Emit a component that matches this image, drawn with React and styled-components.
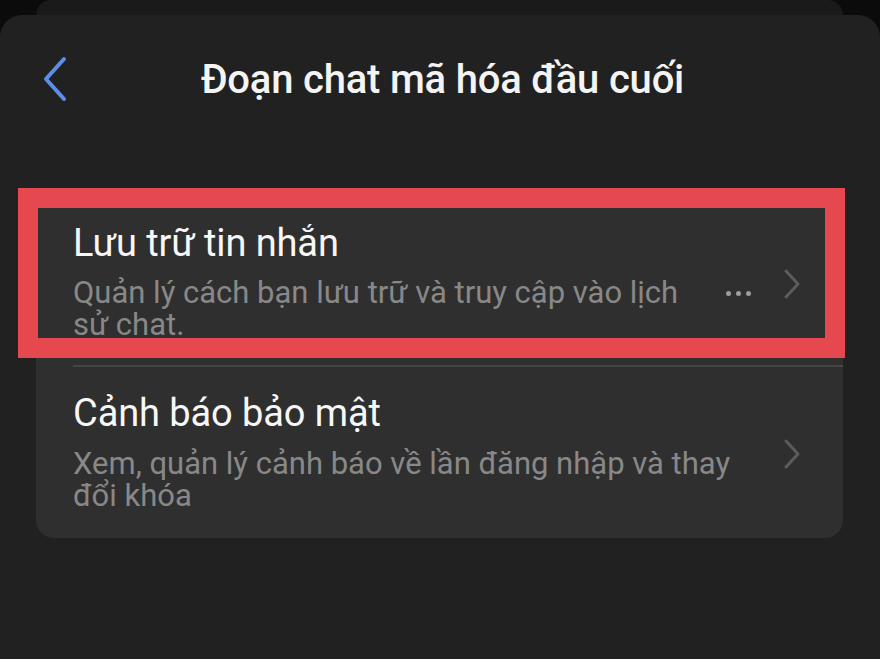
import React from "react";
import styled, { createGlobalStyle } from "styled-components";

const GlobalStyle = createGlobalStyle`
  html, body {
    margin: 0;
    padding: 0;
    background: #0b0b0b;
  }
  body {
    font-family: Roboto, "Liberation Sans", sans-serif;
    -webkit-font-smoothing: antialiased;
  }
`;

const Screen = styled.div`
  width: 880px;
  height: 659px;
  display: flex;
  flex-direction: column;
  overflow: hidden;
  background: #0b0b0b;
`;

const BackLayer = styled.div`
  height: 15px;
  margin: 0 37px 0 36px;
  background: #1a1a1a;
  border-radius: 18px 18px 0 0;
`;

const Sheet = styled.div`
  flex: 1;
  background: #212121;
  border-radius: 22px 22px 0 0;
  padding: 0 37px 0 36px;
  display: flex;
  flex-direction: column;
`;

const Header = styled.div`
  height: 125px;
  display: flex;
  align-items: center;
  justify-content: center;
  position: relative;
`;

const BackButton = styled.button`
  position: absolute;
  left: 6px;
  top: 40px;
  width: 28px;
  height: 48px;
  padding: 0;
  border: none;
  background: none;
  display: flex;
  align-items: center;
`;

const Title = styled.h1`
  margin: 4px 0 0 6px;
  font-size: 40px;
  font-weight: 500;
  color: #f4f4f4;
  letter-spacing: -0.2px;
`;

const Card = styled.div`
  margin-top: 54px;
  background: #2f2f2f;
  border-radius: 18px;
  position: relative;
`;

const Row = styled.div`
  display: flex;
  align-items: center;
  padding: ${(p) => p.$pad};
  border-top: ${(p) => (p.$divider ? "2px solid #454545" : "none")};
  margin-left: ${(p) => (p.$divider ? "37px" : "0")};
  padding-left: ${(p) => (p.$divider ? "0" : "37px")};
`;

const RowText = styled.div`
  flex: 1;
  min-width: 0;
`;

const RowTitle = styled.div`
  font-size: 38px;
  color: #f7f7f7;
  line-height: 46px;
  letter-spacing: -0.1px;
`;

const RowSub = styled.div`
  margin-top: ${(p) => p.$gap};
  font-size: 31px;
  line-height: 32px;
  color: #888888;
  max-width: ${(p) => p.$max};
  letter-spacing: 0;
`;

const Trail = styled.div`
  display: flex;
  align-items: center;
  gap: 32px;
  justify-content: flex-end;
  padding-right: 42px;
  margin-top: ${(p) => p.$mt};
`;

const Dots = styled.div`
  display: flex;
  gap: 5px;
  margin-top: 20px;
`;

const Dot = styled.span`
  width: 5px;
  height: 5px;
  border-radius: 50%;
  background: #9c9c9c;
`;

const Highlight = styled.div`
  position: absolute;
  left: -18px;
  top: -6px;
  width: 827px;
  height: 170px;
  box-sizing: border-box;
  border: 20px solid #e5484f;
  pointer-events: none;
`;

const ChevronLeft = () => (
  <svg width="28" height="48" viewBox="0 0 28 48">
    <path
      d="M22 4 L4 24 L22 44"
      fill="none"
      stroke="#5b8eea"
      strokeWidth="4"
      strokeLinecap="round"
      strokeLinejoin="round"
    />
  </svg>
);

const ChevronRight = () => (
  <svg width="18" height="32" viewBox="0 0 18 32">
    <path
      d="M3 3 L15 16 L3 29"
      fill="none"
      stroke="#5c5c5c"
      strokeWidth="3"
      strokeLinecap="round"
      strokeLinejoin="round"
    />
  </svg>
);

export default function App() {
  return (
    <Screen>
      <GlobalStyle />
      <BackLayer />
      <Sheet>
        <Header>
          <BackButton aria-label="Quay lại">
            <ChevronLeft />
          </BackButton>
          <Title>Đoạn chat mã hóa đầu cuối</Title>
        </Header>
        <Card>
          <Row $pad="26px 0 24px 37px">
            <RowText>
              <RowTitle>Lưu trữ tin nhắn</RowTitle>
              <RowSub $gap="11px" $max="625px">
                Quản lý cách bạn lưu trữ và truy cập vào lịch sử chat.
              </RowSub>
            </RowText>
            <Trail $mt="6px">
              <Dots>
                <Dot />
                <Dot />
                <Dot />
              </Dots>
              <ChevronRight />
            </Trail>
          </Row>
          <Row $divider $pad="23px 0 26px 0">
            <RowText>
              <RowTitle>Cảnh báo bảo mật</RowTitle>
              <RowSub $gap="12px" $max="690px">
                Xem, quản lý cảnh báo về lần đăng nhập và thay đổi khóa
              </RowSub>
            </RowText>
            <Trail $mt="6px">
              <ChevronRight />
            </Trail>
          </Row>
          <Highlight />
        </Card>
      </Sheet>
    </Screen>
  );
}
